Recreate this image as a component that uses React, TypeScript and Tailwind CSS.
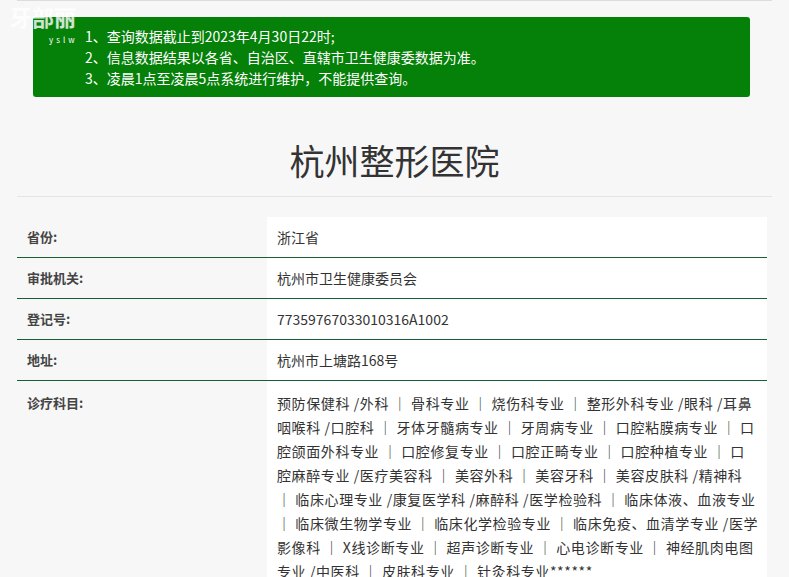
export default function App() {
  const rows: [string, string][] = [
    ["省份:", "浙江省"],
    ["审批机关:", "杭州市卫生健康委员会"],
    ["登记号:", "77359767033010316A1002"],
    ["地址:", "杭州市上塘路168号"],
  ];
  const items =
    "预防保健科 /外科 ｜ 骨科专业 ｜ 烧伤科专业 ｜ 整形外科专业 /眼科 /耳鼻咽喉科 /口腔科 ｜ 牙体牙髓病专业 ｜ 牙周病专业 ｜ 口腔粘膜病专业 ｜ 口腔颌面外科专业 ｜ 口腔修复专业 ｜ 口腔正畸专业 ｜ 口腔种植专业 ｜ 口腔麻醉专业 /医疗美容科 ｜ 美容外科 ｜ 美容牙科 ｜ 美容皮肤科 /精神科 ｜ 临床心理专业 /康复医学科 /麻醉科 /医学检验科 ｜ 临床体液、血液专业 ｜ 临床微生物学专业 ｜ 临床化学检验专业 ｜ 临床免疫、血清学专业 /医学影像科 ｜ X线诊断专业 ｜ 超声诊断专业 ｜ 心电诊断专业 ｜ 神经肌肉电图专业 /中医科 ｜ 皮肤科专业 ｜ 针灸科专业******";
  return (
    <div className="w-[789px] h-[577px] overflow-hidden bg-[#f7f7f7] relative" style={{ fontFamily: '"Microsoft YaHei", "Noto Sans CJK SC", sans-serif' }}>
      <div className="mx-[17px] border-t border-[#ddd] h-[17px]" />
      <div className="mx-[33px] w-[717px] h-[80px] bg-[#058008] rounded-[3px] text-white text-[14px] leading-[21px] pt-[9px] pl-[52px]">
        <div>1、查询数据截止到2023年4月30日22时;</div>
        <div>2、信息数据结果以各省、自治区、直辖市卫生健康委数据为准。</div>
        <div>3、凌晨1点至凌晨5点系统进行维护，不能提供查询。</div>
      </div>
      <div className="absolute left-[10px] top-[4px] text-white/80 font-bold text-[22px] leading-[24px]">牙部丽</div>
      <div className="absolute left-[49px] top-[34px] text-white text-[8px] tracking-[3px]">yslw</div>
      <div className="mx-[17px] mt-[40px] h-[60px] border-b border-[#e5e5e5] text-center text-[35px] leading-[46px] text-[#333]">杭州整形医院</div>
      <div className="mx-[17px] mt-[20px] w-[750px] text-[13px]">
        {rows.map(([k, v], i) => (
          <div key={i} className="flex border-b border-[#175e34]">
            <div className="w-[250px] pl-[10px] h-[40px] flex items-center font-bold text-[#444]">{k}</div>
            <div className="flex-1 bg-white pl-[10px] h-[40px] flex items-center text-[14px] text-[#333]">{v}</div>
          </div>
        ))}
        <div className="flex border-b border-[#175e34]">
          <div className="w-[250px] pl-[10px] pt-[12px] font-bold text-[#444]">诊疗科目:</div>
          <div className="flex-1 bg-white pl-[10px] pr-[8px] pt-[10px] pb-[10px] text-[14px] leading-[24px] tracking-[0.6px] text-[#333]">{items}</div>
        </div>
        <div className="flex h-[40px]">
          <div className="w-[250px]" />
          <div className="flex-1 bg-white" />
        </div>
      </div>
    </div>
  );
}
